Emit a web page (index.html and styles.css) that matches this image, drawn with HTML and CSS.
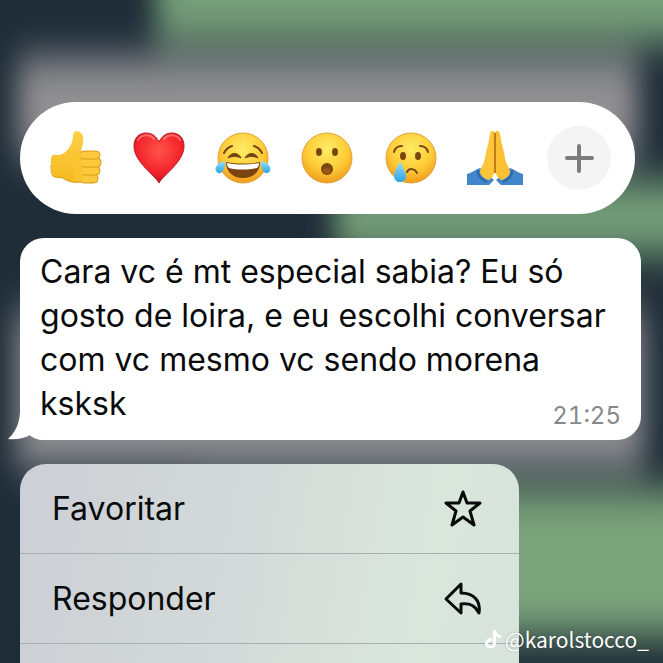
FILE: index.html
```
<!DOCTYPE html>
<html lang="pt-BR">
<head>
    <meta charset="UTF-8">
    <meta name="viewport" content="width=device-width, initial-scale=1.0">
    <title>Mensagem</title>
    <link rel="stylesheet" href="styles.css">
</head>
<body>
    <!-- Blurred chat wallpaper -->
    <svg class="wallpaper" viewBox="0 0 663 663" preserveAspectRatio="none" aria-hidden="true">
        <defs>
            <filter id="soft" x="-30%" y="-30%" width="160%" height="160%" color-interpolation-filters="sRGB"><feGaussianBlur stdDeviation="14 20"/></filter>
        </defs>
        <rect width="663" height="663" fill="#1f2d38"/>
        <g filter="url(#soft)">
            <rect x="156" y="-120" width="600" height="162" fill="#769f7a"/>
            <rect x="335" y="182" width="400" height="72" fill="#76a07a"/>
            <rect x="200" y="490" width="540" height="146" fill="#7aa37b"/>
            <rect x="18" y="58" width="620" height="100" fill="#919093"/>
            <rect x="16" y="310" width="628" height="158" fill="#8f8e92"/>
        </g>
    </svg>

    <main class="overlay">
        <div class="reactions">
            <button class="reaction" aria-label="Joinha">
                <svg viewBox="-3 0 56 56">
                    <defs><linearGradient id="hand" x1="0" y1="0" x2="0" y2="1"><stop offset="0" stop-color="#ffd04a"/><stop offset="1" stop-color="#f6b91f"/></linearGradient></defs>
                    <path d="M1 29c0-3 2-5 5-4 6 0 9-2 12-6 4-5 5-9 5-14 0-5 8-5 10 1 1 6-1 11-2 16l-3 5 4 24c-6 3-14 1-19-3-4-1-8 1-10-2-2-5-2-12-2-17z" fill="url(#hand)"/>
                    <path d="M1 35c0 5 0 9 2 11 3 2 6 1 10 2 5 4 12 5 18 4" fill="none" stroke="#dc9b18" stroke-width="1"/>
                    <g fill="#fcc93c" stroke="#d99b1c" stroke-width="1">
                        <rect x="30" y="44" width="18" height="9" rx="4"/>
                        <rect x="30" y="36" width="20" height="9" rx="4"/>
                        <rect x="30" y="28" width="21" height="9" rx="4"/>
                        <rect x="30" y="21" width="20" height="8" rx="4"/>
                    </g>
                    <path d="M31 21c-1 8 3 20 1 30h-8V25z" fill="#f9c42f"/>
                </svg>
            </button>
            <button class="reaction" aria-label="Coração">
                <svg viewBox="0 0 56 56">
                    <defs><radialGradient id="heart" cx=".5" cy=".35" r=".65"><stop offset="0" stop-color="#ff5449"/><stop offset=".7" stop-color="#f3222b"/><stop offset="1" stop-color="#c40f20"/></radialGradient></defs>
                    <path d="M28 53C23 44 3 32 3 16 3 8 8 3 15 3c6 0 10 3 13 9 3-6 7-9 13-9 7 0 12 5 12 13 0 16-20 28-25 37z" fill="url(#heart)" stroke="#b51a27" stroke-width="1"/>
                    <path d="M7 10c3-5 11-7 16-1M33 9c5-6 13-4 16 1" fill="none" stroke="#ff9c95" stroke-width="2" stroke-linecap="round" opacity=".6"/>
                </svg>
            </button>
            <button class="reaction" aria-label="Chorando de rir">
                <svg viewBox="0 0 56 56">
                    <defs>
                        <radialGradient id="face" cx=".5" cy=".32" r=".7"><stop offset="0" stop-color="#ffec66"/><stop offset=".6" stop-color="#fecb36"/><stop offset="1" stop-color="#f0981b"/></radialGradient>
                        <linearGradient id="tear" x1="0" y1="0" x2="0" y2="1"><stop offset="0" stop-color="#9be2fb"/><stop offset="1" stop-color="#2ba3e2"/></linearGradient>
                    </defs>
                    <circle cx="28" cy="28" r="25" fill="url(#face)" stroke="#dfa43c" stroke-width="1"/>
                    <path d="M9 23c2-4 5-6 8-7M47 23c-2-4-5-6-8-7" fill="none" stroke="#704214" stroke-width="2" stroke-linecap="round"/>
                    <path d="M13 28c3-6 10-6 13 0-4-2-9-2-13 0zM30 28c3-6 10-6 13 0-4-2-9-2-13 0z" fill="#704214" stroke="#704214" stroke-width="1" stroke-linejoin="round"/>
                    <path d="M11 32c10 2 24 2 34 0 0 10-7 16-17 16s-17-6-17-16z" fill="#7a4310"/>
                    <path d="M12 33c10 2 22 2 32 0 0 3-1 4-2 5-8 2-20 2-28 0-1-1-2-2-2-5z" fill="#fff"/>
                    <path d="M10 31C4 32-1 37 1 41c3 5 10 1 9-10zM46 31c6 1 11 6 9 10-3 5-10 1-9-10z" fill="url(#tear)"/>
                </svg>
            </button>
            <button class="reaction" aria-label="Surpreso">
                <svg viewBox="0 0 56 56">
                    <circle cx="28" cy="28" r="25" fill="url(#face)" stroke="#dfa43c" stroke-width="1"/>
                    <g fill="#77470f"><ellipse cx="20" cy="22" rx="3" ry="4"/><ellipse cx="36" cy="22" rx="3" ry="4"/><ellipse cx="28" cy="39" rx="6" ry="6"/></g>
                    <ellipse cx="28" cy="41" rx="4" ry="3" fill="#96591a"/>
                </svg>
            </button>
            <button class="reaction" aria-label="Triste">
                <svg viewBox="0 0 56 56">
                    <circle cx="28" cy="28" r="25" fill="url(#face)" stroke="#dfa43c" stroke-width="1"/>
                    <g fill="#77470f"><ellipse cx="20" cy="26" rx="3" ry="4"/><ellipse cx="35" cy="26" rx="3" ry="4"/></g>
                    <path d="M11 22c1-4 4-6 8-6M45 22c-1-4-4-6-8-6M24 42c2-4 8-4 10 1" fill="none" stroke="#77470f" stroke-width="2" stroke-linecap="round"/>
                    <path d="M17 31c-2 6-6 10-6 15 0 8 12 8 12 0 0-5-4-9-6-15z" fill="url(#tear)"/>
                </svg>
            </button>
            <button class="reaction" aria-label="Mãos juntas">
                <svg viewBox="0 0 56 56">
                    <path d="M0 44c5-1 9-5 13-6l14 12-5 5H0zM56 44c-5-1-9-5-13-6L29 50l5 5h22z" fill="#4385cb"/>
                    <path d="M11 40c-1 5 3 9 9 12M45 40c1 5-3 9-9 12" fill="none" stroke="#2c65ab" stroke-width="2"/>
                    <path d="M28 3c-1-3-4-3-5 1-1 9-4 16-5 24-1 6-4 9-5 13-1 4 6 9 9 9 3-2 5-5 6-9z" fill="#fdc63a"/>
                    <path d="M28 3c1-3 4-3 5 1 1 9 4 16 5 24 1 6 4 9 5 13 1 4-6 9-9 9-3-2-5-5-6-9z" fill="#fbc033"/>
                    <path d="M28 3v40" fill="none" stroke="#c27c13" stroke-width="2"/>
                </svg>
            </button>
            <button class="reaction reaction-more" aria-label="Mais reações">
                <svg viewBox="0 0 64 64">
                    <circle cx="32" cy="32" r="32" fill="#f4f4f4"/>
                    <path d="M32 20v25M20 32h25" fill="none" stroke="#7b7b7d" stroke-width="4" stroke-linecap="round"/>
                </svg>
            </button>
        </div>

        <article class="bubble">
            <svg class="tail" viewBox="0 0 40 40" aria-hidden="true">
                <path d="M12 0C13 17 11 29 0 39c9 1 17-1 22-4 4 3 8 5 14 5h4V0z" fill="#fff"/>
            </svg>
            <p class="message">Cara vc é mt especial sabia? Eu só gosto de loira, e eu escolhi conversar com vc mesmo vc sendo morena ksksk</p>
            <time class="time">21:25</time>
        </article>

        <nav class="menu">
            <button class="menu-item">
                <span>Favoritar</span>
                <svg viewBox="0 0 40 40"><path d="M20 3l4 11h13L27 22l4 14-11-8-11 8 4-14L3 14h13z"/></svg>
            </button>
            <button class="menu-item">
                <span>Responder</span>
                <svg viewBox="0 0 40 40"><path d="M18 5L3 20l15 14V25c10-1 14 2 18 9 2-12-5-20-18-20z"/></svg>
            </button>
        </nav>
    </main>

    <div class="watermark">
        <svg viewBox="0 0 16 20" aria-hidden="true"><path d="M8 1h3c0 3 2 5 5 5v3c-2 0-4-1-5-2v7c0 7-10 7-11 1 0-4 3-6 7-6v3c-3 0-4 1-4 3 1 3 5 2 5-1z"/></svg>
        <span>@karolstocco_</span>
    </div>
</body>
</html>
```

FILE: styles.css
```
* {
    box-sizing: border-box;
}

body {
    margin: 0;
    height: 100vh;
    overflow: hidden;
    position: relative;
    background: #1f2d38;
    color: #090a0b;
    font-family: Inter, "Liberation Sans", sans-serif;
}

button {
    padding: 0;
    border: none;
    background: none;
    color: inherit;
    font: inherit;
    cursor: pointer;
}

.wallpaper {
    position: absolute;
    inset: 0;
    width: 100%;
    height: 100%;
}

.overlay {
    position: relative;
    min-height: 100vh;
    padding: 102px 22px 0 20px;
    display: flex;
    flex-direction: column;
    gap: 24px;
}

.reactions {
    display: grid;
    grid-template-columns: repeat(7, 1fr);
    align-items: center;
    height: 112px;
    margin-right: 6px;
    padding: 0 14px 0 13px;
    border-radius: 56px;
    background: #fff;
}

.reaction {
    display: flex;
    justify-content: center;
}

.reaction svg {
    width: 56px;
    height: 56px;
}

.reaction-more svg {
    width: 64px;
    height: 64px;
}

.bubble {
    position: relative;
    padding: 12px 20px 14px;
    border-radius: 24px;
    background: #fff;
}

.message {
    position: relative;
    margin: 0;
    font-size: 32px;
    line-height: 44px;
}

.time {
    position: absolute;
    right: 20px;
    bottom: 10px;
    color: #88888a;
    font-size: 24px;
    font-variant-numeric: tabular-nums;
    line-height: 28px;
}

.tail {
    position: absolute;
    left: -12px;
    bottom: 0;
    width: 40px;
    height: 40px;
}

.menu {
    flex: 1;
    width: min(499px, 100%);
    overflow: hidden;
    border-radius: 26px 26px 0 0;
    background: linear-gradient(100deg, #cccfd5 0%, #d4dad9 45%, #d9e6dc 80%, #d7e3db 100%);
}

.menu-item {
    display: flex;
    justify-content: space-between;
    align-items: center;
    width: 100%;
    height: 90px;
    padding: 0 36px 0 32px;
    border-bottom: 1px solid #a6b0b0;
    font-size: 32px;
}

.menu-item svg {
    width: 40px;
    height: 40px;
    fill: none;
    stroke: #090a0b;
    stroke-width: 3;
    stroke-linejoin: round;
}

.watermark {
    position: absolute;
    right: 14px;
    bottom: 10px;
    display: flex;
    align-items: center;
    gap: 4px;
    color: #fff;
    font-family: "Noto Sans CJK SC", "Noto Sans", sans-serif;
    font-size: 21px;
    line-height: 28px;
    text-shadow: 0 0 2px rgba(0, 0, 0, 0.3);
}

.watermark svg {
    width: 16px;
    height: 20px;
    fill: #fff;
}
```
